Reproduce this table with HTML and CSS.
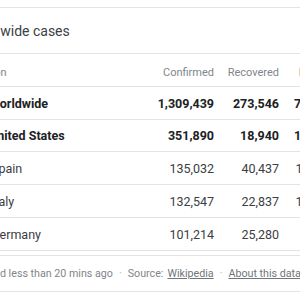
FILE: index.html
```html
<!DOCTYPE html>
<html>
<head>
<meta charset="utf-8">
<link rel="stylesheet" href="styles.css">
</head>
<body>
<div class="card">
  <div class="title">Worldwide cases</div>
  <div class="table">
    <div class="row head">
      <div class="name">Location</div>
      <div class="num">Confirmed</div>
      <div class="num">Recovered</div>
      <div class="num">Deaths</div>
    </div>
    <div class="row bold world">
      <div class="name loc">Worldwide</div>
      <div class="num">1,309,439</div>
      <div class="num">273,546</div>
      <div class="num">72,638</div>
    </div>
    <div class="row bold us">
      <div class="name loc">United States</div>
      <div class="num">351,890</div>
      <div class="num">18,940</div>
      <div class="num">10,389</div>
    </div>
    <div class="row">
      <div class="name loc">Spain</div>
      <div class="num">135,032</div>
      <div class="num">40,437</div>
      <div class="num">13,055</div>
    </div>
    <div class="row">
      <div class="name loc">Italy</div>
      <div class="num">132,547</div>
      <div class="num">22,837</div>
      <div class="num">15,887</div>
    </div>
    <div class="row">
      <div class="name loc">Germany</div>
      <div class="num">101,214</div>
      <div class="num">25,280</div>
      <div class="num">1,607</div>
    </div>
  </div>
  <div class="footer">
    <span>Updated less than 20 mins ago</span>
    <span class="dot">·</span>
    <span>Source:</span>
    <a class="link src" href="#">Wikipedia</a>
    <span class="dot">·</span>
    <a class="link" href="#">About this data</a>
  </div>
</div>
</body>
</html>
```

FILE: styles.css
```css
html, body {
  margin: 0;
  padding: 0;
  background: #fff;
  overflow: hidden;
}
body {
  width: 300px;
  height: 300px;
  font-family: Roboto, "Noto Sans", Arial, sans-serif;
  color: #3c4043;
}
.card {
  margin: 7px 0 0 -36px;
  width: 369px;
  border-top: 1px solid #e3e3e3;
  border-bottom: 1px solid #e3e3e3;
}
.title {
  height: 45px;
  display: flex;
  align-items: center;
  font-size: 14px;
  color: #3c4043;
  border-bottom: 1px solid #e3e3e3;
}
.row {
  display: grid;
  grid-template-columns: 170px 80px 65px 54px;
  height: 32px;
  align-items: center;
  border-bottom: 1px solid #e3e3e3;
  font-size: 12.5px;
  color: #3c4043;
}
.row.head {
  align-items: end;
  padding-bottom: 7px;
  box-sizing: border-box;
  height: 33px;
  font-size: 11px;
  color: #80868b;
}
.row.us {
  height: 31px;
}
.bold {
  font-weight: 700;
  color: #202124;
}
.name {
  white-space: nowrap;
}
.loc {
  padding-left: 27px;
}
.bold .loc {
  padding-left: 25px;
}
.num {
  text-align: right;
  white-space: nowrap;
}
.footer {
  margin-top: 4px;
  padding-left: 2px;
  border-top: 1px solid #e3e3e3;
  height: 35px;
  display: flex;
  align-items: center;
  font-size: 10.7px;
  color: #80868b;
  white-space: nowrap;
}
.dot {
  margin: 0 6px;
  color: #b0b3b8;
}
.link {
  color: #70757a;
  text-decoration: underline;
}
.src {
  margin-left: 4px;
}
```
